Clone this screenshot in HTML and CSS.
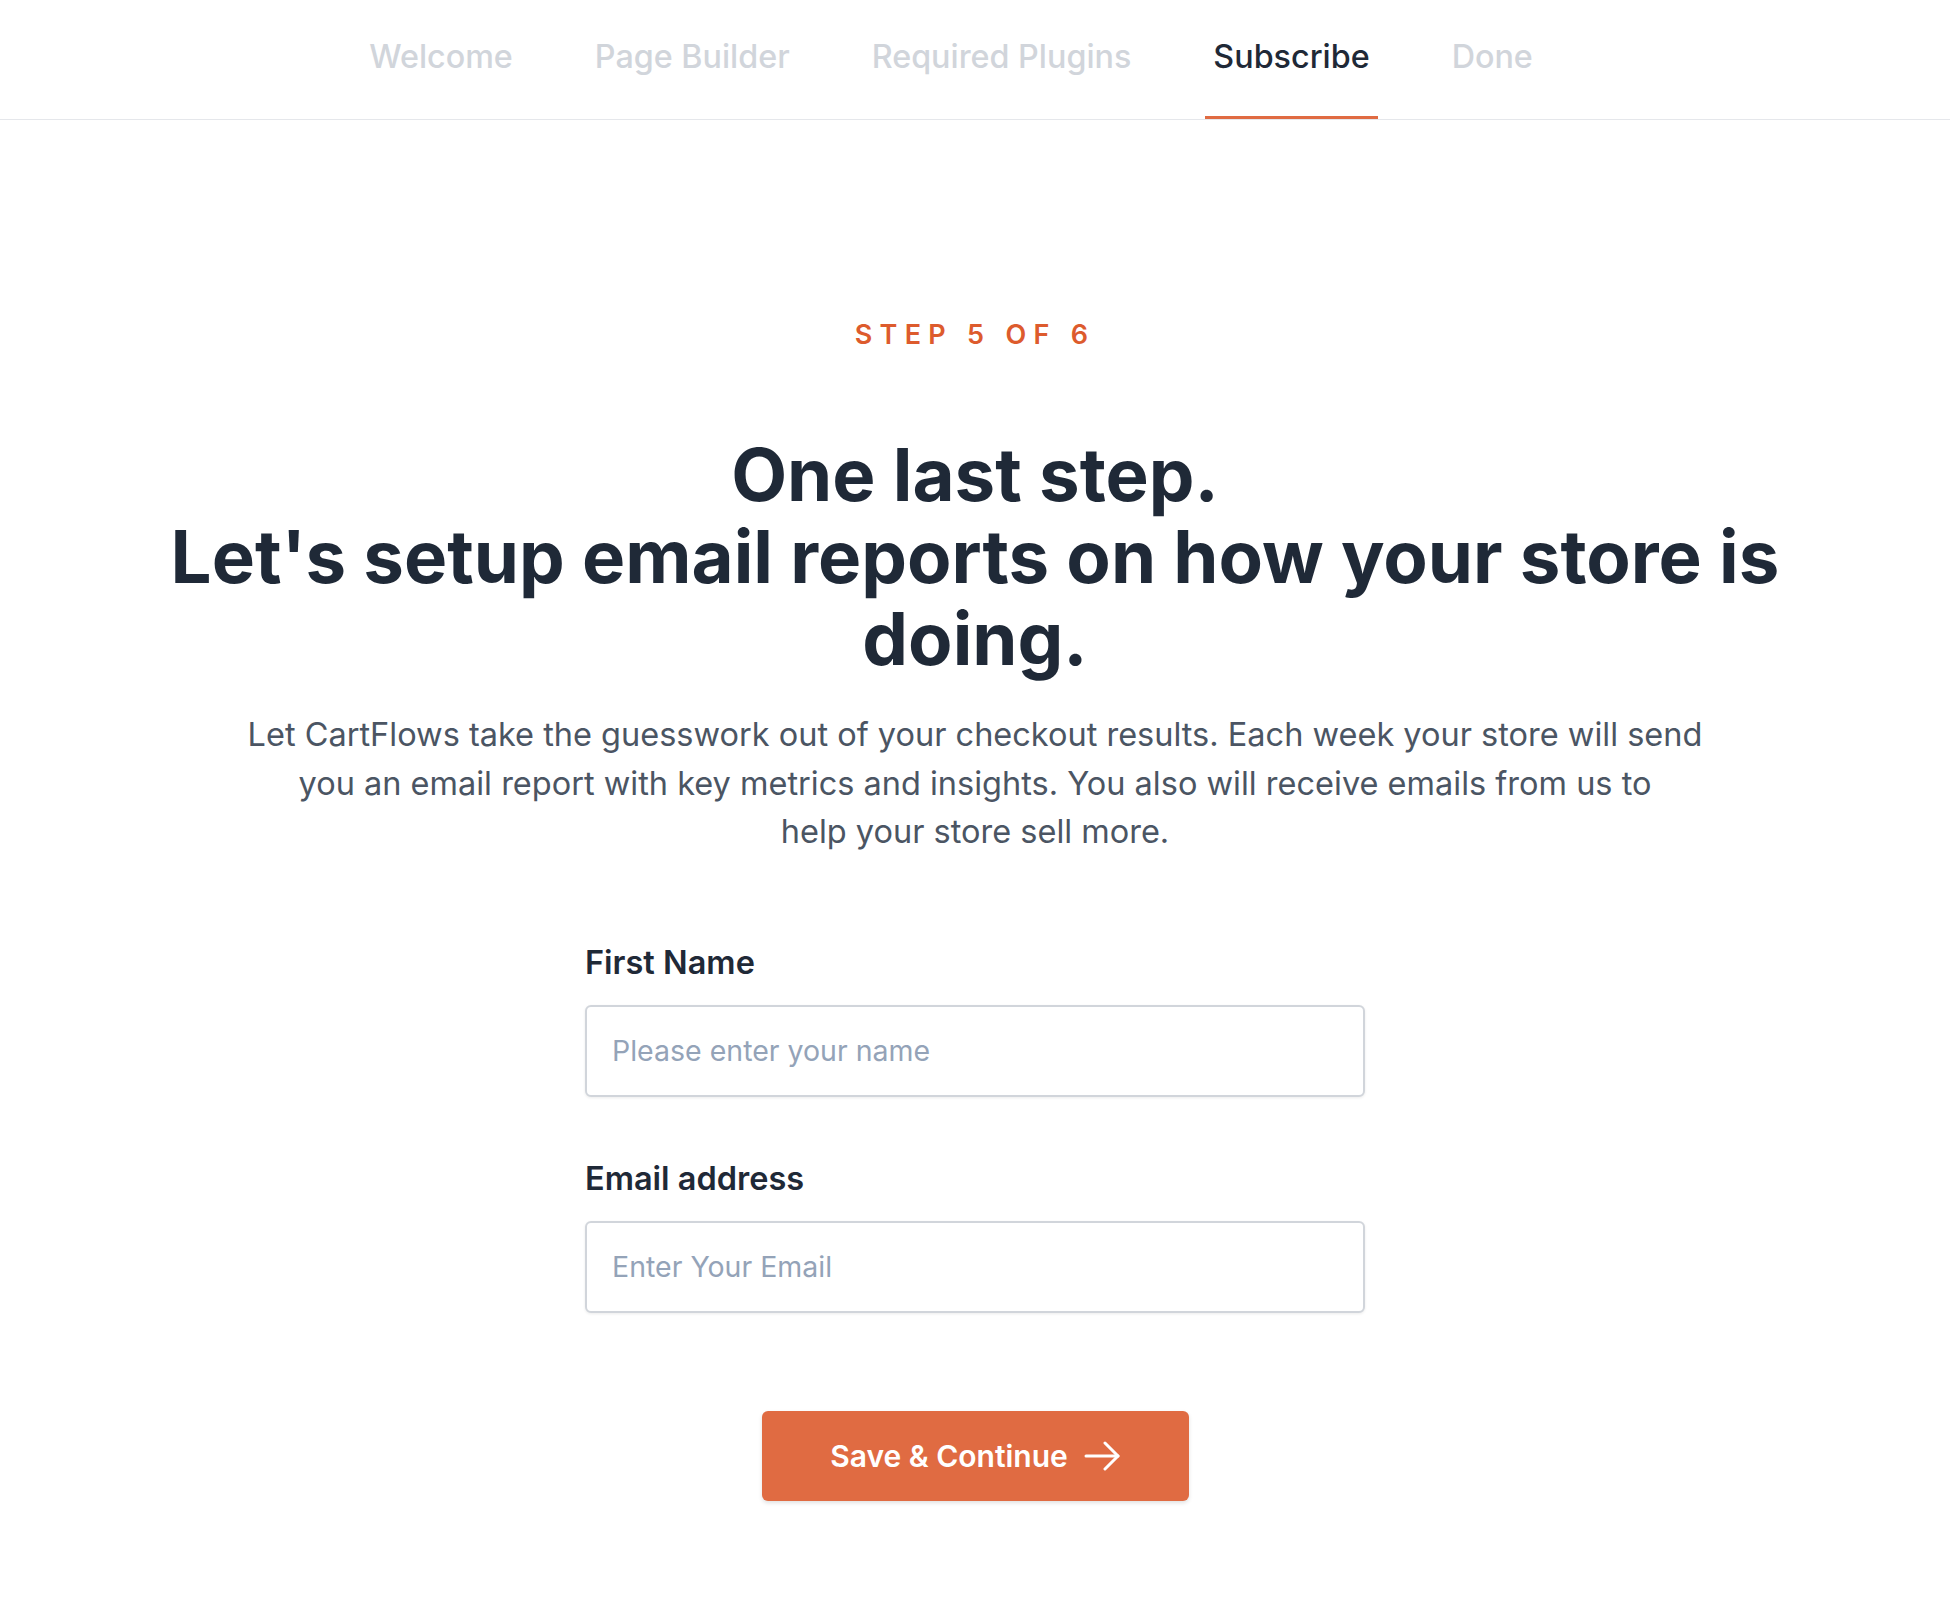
FILE: index.html
```html
<!DOCTYPE html>
<html lang="en">
<head>
  <meta charset="UTF-8">
  <meta name="viewport" content="width=device-width, initial-scale=1.0">
  <title>CartFlows Setup - Subscribe</title>
  <link rel="stylesheet" href="styles.css">
</head>
<body>
  <nav class="steps">
    <a class="step">Welcome</a>
    <a class="step">Page Builder</a>
    <a class="step">Required Plugins</a>
    <a class="step active">Subscribe</a>
    <a class="step">Done</a>
  </nav>

  <main class="wizard">
    <div class="step-count">Step 5 of 6</div>
    <h1 class="title">One last step.<br>Let's setup email reports on how your store is doing.</h1>
    <p class="intro">Let CartFlows take the guesswork out of your checkout results. Each week your store will send you an email report with key metrics and insights. You also will receive emails from us to<br>help your store sell more.</p>

    <form class="subscribe-form" onsubmit="return false">
      <label class="field-label" for="firstName">First Name</label>
      <input class="field" type="text" id="firstName" placeholder="Please enter your name">

      <label class="field-label" for="email">Email address</label>
      <input class="field" type="email" id="email" placeholder="Enter Your Email">

      <div class="actions">
        <button class="btn-primary" type="submit">
          Save &amp; Continue
          <svg width="36" height="30" viewBox="0 0 36 30" fill="none" stroke="currentColor" stroke-width="3" stroke-linecap="round" stroke-linejoin="round">
            <path d="M2 15h32"/>
            <path d="M21 2l13 13-13 13"/>
          </svg>
        </button>
      </div>
    </form>
  </main>
</body>
</html>
```

FILE: styles.css
```css
body {
  margin: 0;
  font-family: Inter, "Noto Sans", sans-serif;
  background: #fff;
  color: #1f2937;
}
.steps {
  display: flex;
  justify-content: center;
  gap: 66px;
  height: 119px;
  padding-right: 48px;
  border-bottom: 1px solid #e5e7eb;
}
.step {
  box-sizing: border-box;
  display: flex;
  align-items: center;
  height: 119px;
  padding: 0 8px 3px;
  font-size: 32.3px;
  font-weight: 500;
  color: #d1d5db;
  border-bottom: 3px solid transparent;
  cursor: pointer;
}
.step.active {
  color: #1f2937;
  border-bottom-color: #e06b42;
}
.wizard {
  display: flex;
  flex-direction: column;
  align-items: center;
  text-align: center;
  padding: 199px 40px 100px;
}
.step-count {
  font-size: 27px;
  font-weight: 600;
  letter-spacing: 0.27em;
  text-transform: uppercase;
  color: #dd5b2d;
  line-height: 32px;
}
.title {
  max-width: 1700px;
  margin: 83px 0 0;
  font-size: 72.6px;
  line-height: 82px;
  font-weight: 700;
  color: #1f2937;
}
.intro {
  max-width: 1480px;
  margin: 31px 0 0;
  font-size: 32.5px;
  line-height: 48.5px;
  color: #4b5563;
}
.subscribe-form {
  display: flex;
  flex-direction: column;
  width: 780px;
  margin-top: 88px;
  text-align: left;
}
.field-label {
  font-size: 32.5px;
  font-weight: 600;
  line-height: 36px;
  color: #1f2937;
}
.field {
  box-sizing: border-box;
  height: 92px;
  margin: 24px 0 64px;
  padding: 0 25px;
  font-family: inherit;
  font-size: 28.5px;
  color: #1f2937;
  border: 2px solid #d1d5db;
  border-radius: 6px;
  box-shadow: 0 1px 3px rgba(0, 0, 0, 0.08);
}
.field::placeholder {
  color: #94a3b8;
}
.field:last-of-type {
  margin-bottom: 0;
}
.actions {
  display: flex;
  justify-content: center;
  margin-top: 98px;
}
.btn-primary {
  display: flex;
  align-items: center;
  justify-content: center;
  gap: 16px;
  width: 427px;
  height: 90px;
  padding: 0;
  font-family: inherit;
  font-size: 30px;
  font-weight: 600;
  color: #fff;
  background: #e06b42;
  border: none;
  border-radius: 6px;
  box-shadow: 0 2px 4px rgba(0, 0, 0, 0.12);
  cursor: pointer;
}
```
